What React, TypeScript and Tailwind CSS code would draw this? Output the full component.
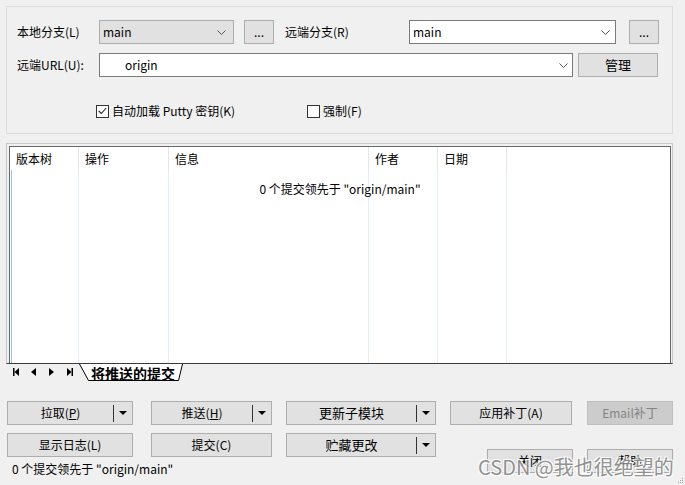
import React from "react";

const font = "font-['Noto_Sans_CJK_SC','Noto_Sans',sans-serif]";

function Chevron() {
  return (
    <svg width="9" height="5" viewBox="0 0 9 5">
      <path d="M0.5 0.5 L4.5 4.5 L8.5 0.5" fill="none" stroke="#555" />
    </svg>
  );
}

function DropArrow() {
  return (
    <svg width="8" height="4" viewBox="0 0 8 4">
      <path d="M0 0 H8 L4 4 Z" fill="#000" />
    </svg>
  );
}

function Button({
  children,
  className = "",
  disabled = false,
}: {
  children: React.ReactNode;
  className?: string;
  disabled?: boolean;
}) {
  return (
    <div
      className={`flex h-[24px] items-center justify-center border ${
        disabled
          ? "border-[#bfbfbf] bg-[#cccccc] text-[#838383]"
          : "border-[#adadad] bg-[#e1e1e1] text-black"
      } ${className}`}
    >
      {children}
    </div>
  );
}

function SplitButton({ children, className = "" }: { children: React.ReactNode; className?: string }) {
  return (
    <div className={`flex h-[24px] items-center border border-[#adadad] bg-[#e1e1e1] ${className}`}>
      <span className="flex-1 text-center">{children}</span>
      <span className="h-[17px] w-px bg-[#333]" />
      <span className="flex w-[18px] justify-center">
        <DropArrow />
      </span>
    </div>
  );
}

function CheckBox({ checked }: { checked?: boolean }) {
  return (
    <span className="flex h-[13px] w-[13px] items-center justify-center border border-[#333] bg-white">
      {checked && (
        <svg width="9" height="8" viewBox="0 0 9 8">
          <path d="M0.8 4 L3.3 6.5 L8.2 1" fill="none" stroke="#222" strokeWidth="1.1" />
        </svg>
      )}
    </span>
  );
}

const columns = [
  { title: "版本树", w: "w-[69px]" },
  { title: "操作", w: "w-[90px]" },
  { title: "信息", w: "w-[200px]" },
  { title: "作者", w: "w-[69px]" },
  { title: "日期", w: "w-[69px]" },
];

export default function App() {
  return (
    <div
      className={`relative h-[485px] w-[685px] overflow-hidden bg-[#f0f0f0] pl-[6px] pt-[6px] text-[12px] leading-[16px] text-black ${font}`}
    >
      {/* 上部分组 */}
      <div className="h-[128px] w-[667px] border border-[#dcdcdc] pl-[10px] pt-[13px]">
        <div className="flex h-[24px] items-center">
          <span className="w-[82px]">本地分支(L)</span>
          <div className="flex h-[24px] w-[135px] items-center justify-between border border-[#adadad] bg-[#e1e1e1] pl-[3px] pr-[7px]">
            <span>main</span>
            <Chevron />
          </div>
          <Button className="ml-[10px] h-[23px] w-[30px]">...</Button>
          <span className="ml-[11px] w-[124px]">远端分支(R)</span>
          <div className="flex h-[24px] w-[207px] items-center justify-between border border-[#7a7a7a] bg-white pl-[3px] pr-[5px]">
            <span>main</span>
            <Chevron />
          </div>
          <Button className="ml-[13px] h-[23px] w-[30px]">...</Button>
        </div>

        <div className="mt-[9px] flex h-[24px] items-center">
          <span className="w-[82px]">远端URL(U):</span>
          <div className="flex h-[24px] w-[474px] items-center justify-between border border-[#7a7a7a] bg-white pl-[25px] pr-[4px]">
            <span>origin</span>
            <Chevron />
          </div>
          <Button className="ml-[5px] h-[23px] w-[80px] text-[13px]">管理</Button>
        </div>

        <div className="ml-[79px] mt-[26px] flex h-[16px] items-center">
          <div className="flex w-[211px] items-center gap-[3px]">
            <CheckBox checked />
            <span>自动加载 Putty 密钥(K)</span>
          </div>
          <div className="flex items-center gap-[3px]">
            <CheckBox />
            <span>强制(F)</span>
          </div>
        </div>
      </div>

      {/* 提交列表 */}
      <div className="mt-[9px] flex h-[221px] w-[667px] flex-col border-x border-t border-b border-[#c8c8c8] border-b-[#3c3c3c] pl-[2px] pt-[2px]">
        <div className="relative flex w-[662px] flex-1 border-x border-t border-[#696969] bg-white">
          {columns.map((c, i) => (
            <div key={c.title} className={`flex flex-col ${c.w}`}>
              <div className="flex h-[23px] items-center border-r border-[#e5e5e5] pl-[6px]">{c.title}</div>
              <div className={`flex-1 border-r border-[#e3eefb] ${i === 0 ? "ml-[1px] border-l border-l-[#9fc4ea]" : ""}`} />
            </div>
          ))}
          <div className="flex-1" />
          <div className="absolute left-0 right-0 top-[34px] text-center">0 个提交领先于 "origin/main"</div>
        </div>
      </div>

      {/* 标签栏 */}
      <div className="flex h-[17px] items-start pl-[7px]">
        <span className="flex h-[15px] w-[18px] items-center">
          <svg width="6" height="8" viewBox="0 0 6 8">
            <rect x="0" y="0" width="1.5" height="8" fill="#000" />
            <path d="M6 0 V8 L1.5 4 Z" fill="#000" />
          </svg>
        </span>
        <span className="flex h-[15px] w-[18px] items-center">
          <svg width="5" height="8" viewBox="0 0 5 8">
            <path d="M5 0 V8 L0 4 Z" fill="#000" />
          </svg>
        </span>
        <span className="flex h-[15px] w-[18px] items-center">
          <svg width="5" height="8" viewBox="0 0 5 8">
            <path d="M0 0 V8 L5 4 Z" fill="#000" />
          </svg>
        </span>
        <span className="flex h-[15px] w-[12px] items-center">
          <svg width="6" height="8" viewBox="0 0 6 8">
            <path d="M0 0 V8 L4.5 4 Z" fill="#000" />
            <rect x="4.5" y="0" width="1.5" height="8" fill="#000" />
          </svg>
        </span>
        <div className="relative flex h-[17px] w-[104px] items-center pl-[12px]">
          <svg className="absolute left-0 top-0" width="104" height="17" viewBox="0 0 104 17">
            <path d="M0.5 0 L9.5 16.5 L99.5 16.5 L103.5 0" fill="#fff" stroke="#000" />
          </svg>
          <span className="relative text-[14px] font-bold leading-[16px]">将推送的提交</span>
        </div>
      </div>

      {/* 按钮区 */}
      <div className="mt-[20px] flex pl-[1px]">
        <SplitButton className="w-[126px]">
          拉取(<span className="underline">P</span>)
        </SplitButton>
        <SplitButton className="ml-[18px] w-[121px]">
          推送(<span className="underline">H</span>)
        </SplitButton>
        <SplitButton className="ml-[14px] w-[150px] text-[13px]">更新子模块</SplitButton>
        <Button className="ml-[14px] w-[122px]">应用补丁(A)</Button>
        <Button className="ml-[15px] w-[86px]" disabled>
          Email补丁
        </Button>
      </div>

      <div className="mt-[8px] flex pl-[1px]">
        <div>
          <div className="flex">
            <Button className="w-[126px]">显示日志(L)</Button>
            <Button className="ml-[18px] w-[121px]">提交(C)</Button>
            <SplitButton className="ml-[14px] w-[150px] text-[13px]">贮藏更改</SplitButton>
          </div>
          <div className="mt-[4px] pl-[5px]">0 个提交领先于 "origin/main"</div>
        </div>
        <div className="ml-[51px] mt-[16px] flex">
          <Button className="w-[86px]">关闭</Button>
          <Button className="ml-[14px] w-[86px]">帮助</Button>
        </div>
      </div>

      {/* 水印 */}
      <div className="absolute left-[478px] top-[455px] text-[20px] leading-[24px] text-[#8a8a8a] opacity-90 [text-shadow:1px_1px_0_#fff,-1px_-1px_0_#fff,1px_-1px_0_#fff,-1px_1px_0_#fff]">
        CSDN @我也很绝望的
      </div>

      {/* 调整大小手柄 */}
      <svg className="absolute bottom-[1px] right-[1px]" width="6" height="6" viewBox="0 0 6 6">
        <rect x="4" y="0" width="1" height="1" fill="#a0a0a0" />
        <rect x="2" y="2" width="1" height="1" fill="#a0a0a0" />
        <rect x="4" y="2" width="1" height="1" fill="#a0a0a0" />
        <rect x="0" y="4" width="1" height="1" fill="#a0a0a0" />
        <rect x="2" y="4" width="1" height="1" fill="#a0a0a0" />
        <rect x="4" y="4" width="1" height="1" fill="#a0a0a0" />
      </svg>
    </div>
  );
}
